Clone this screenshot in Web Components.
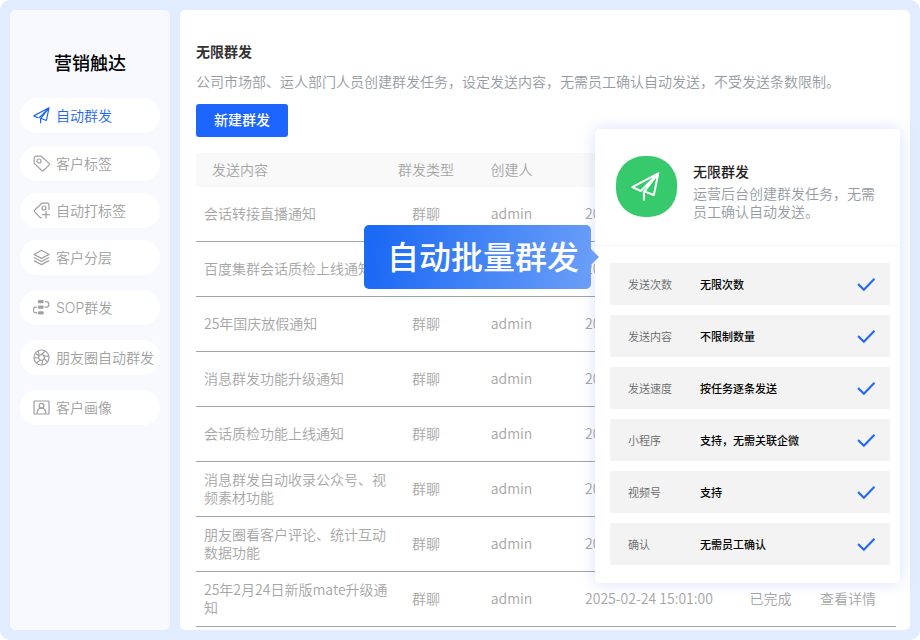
<!DOCTYPE html>
<html lang="zh-CN">
<head>
<meta charset="utf-8">
<title>营销触达</title>
<style>
html, body { margin: 0; background: #fff; }
body { font-family: "Noto Sans CJK SC", "Noto Sans", sans-serif; font-size: 14px; font-weight: 350; line-height: 18px; color: #999; }
</style>
</head>
<body>
<marketing-app></marketing-app>
<script>
const icons = {
  plane: '<path d="M5.500 11 .8 8.900 16 .8 13.400 13.500 8.200 11.500M7.600 16.200V11.700L16 .8 6 10.900"/>',
  tag: '<path d="M2.700 1.200h5.500L16 8.400a1.200 1.200 0 0 1 0 1.700l-5.500 5.400a1.300 1.300 0 0 1-1.800 0L1.200 8.400V2.700a1.500 1.500 0 0 1 1.500-1.500z"/><circle cx="6" cy="6" r="2"/>',
  tagplus: '<path d="M16 8V2.700a1.500 1.500 0 0 0-1.500-1.500H9L1.600 8a1.200 1.200 0 0 0 0 1.700l5.300 5.600a1.300 1.300 0 0 0 1.900 0M13 9v7.500M9.200 12.700h7.600"/><circle cx="11" cy="6" r="2"/>',
  layers: '<path d="M8.500 1.200 16 5.400 8.500 9.400 1 5.400zM1 8.500l7.500 4 7.500-4M1 11.600l7.500 4 7.500-4"/>',
  flow: '<g fill="currentColor" stroke="none"><rect x="5" y="1" width="5.600" height="3.200" rx="1"/><rect x="5" y="6.600" width="5.600" height="3.200" rx="1"/><rect x="5" y="12.200" width="5.600" height="3.200" rx="1"/></g><path d="M12 2.600h1a2.800 2.800 0 0 1 0 5.600h-1.500M4 8.200H3a2.800 2.800 0 0 0 0 5.600h1.500"/>',
  aperture: '<circle cx="8.500" cy="8.500" r="7.500"/><circle cx="8.500" cy="8.500" r="2.800"/><path d="M6 7.200 5.400 1.700M8.200 5.700l4-3.700M10.800 6.900l5.100.5M11.200 9.300l3.100 3.800M9.500 11.100l-.6 4.900M7.200 11l-3.800 3.100M5.700 9l-4.600-.2M6.200 7 2.600 4.200"/>',
  portrait: '<rect x="1" y="2" width="15" height="13" rx=".6"/><circle cx="8.500" cy="6.700" r="2.400"/><path d="M4 14.600c.2-3.400 2-5.500 4.500-5.500s4.300 2.100 4.500 5.500"/>',
  check: '<path d="M1 8.500 6.500 14 16.500 3.500"/>'
};
const define = (name, html, setup) => {
  const template = document.createElement('template');
  template.innerHTML = html;
  customElements.define(name, class extends HTMLElement {
    constructor() {
      super();
      this.attachShadow({ mode: 'open' }).append(template.content.cloneNode(true));
    }
    connectedCallback() { if (setup) setup(this, this.shadowRoot); }
  });
};

define('line-icon', `<style>
:host { display: block; flex: none; width: 17px; height: 17px; }
svg { display: block; width: 100%; height: 100%; fill: none; stroke: currentColor; stroke-width: var(--stroke, 1.2); stroke-linejoin: round; stroke-linecap: var(--cap, butt); }
</style><svg viewBox="0 0 17 17" aria-hidden="true"></svg>`,
(el, root) => { root.querySelector('svg').innerHTML = icons[el.getAttribute('name')]; });

define('nav-item', `<style>
:host { display: block; }
a { display: flex; align-items: center; gap: 6px; height: 35px; padding-left: 13px; box-sizing: border-box; border-radius: 18px; background: #fff; color: #a0a0a0; text-decoration: none; white-space: nowrap; font-family: Inter, "Noto Sans CJK SC", sans-serif; }
:host([active]) a { color: #1c66f5; }
</style><a href="#"><span><slot></slot></span></a>`,
(el, root) => {
  const link = root.querySelector('a');
  const icon = document.createElement('line-icon');
  icon.setAttribute('name', el.getAttribute('icon'));
  link.prepend(icon);
  if (el.hasAttribute('active')) link.setAttribute('aria-current', 'page');
});

define('side-bar', `<style>
:host { display: block; width: 160px; flex: none; padding: 38px 10px 10px; box-sizing: border-box; border-radius: 5px; background: #f7f9fe; }
h1 { margin: 0 0 22px; font-size: 18px; line-height: 28px; font-weight: 500; color: #000; text-align: center; }
nav { display: grid; gap: 15px; }
.top { display: grid; gap: 12px; }
nav-item[active] { margin-bottom: 1px; }
</style><h1>营销触达</h1>
<nav><div class="top">
<nav-item icon="plane" active>自动群发</nav-item>
<nav-item icon="tag">客户标签</nav-item>
<nav-item icon="tagplus">自动打标签</nav-item>
<nav-item icon="layers">客户分层</nav-item></div>
<nav-item icon="flow">SOP群发</nav-item>
<nav-item icon="aperture">朋友圈自动群发</nav-item>
<nav-item icon="portrait">客户画像</nav-item>
</nav>`);

define('task-table', `<style>
:host { display: block; }
table { width: 100%; table-layout: fixed; border-collapse: separate; border-spacing: 0; color: #a6a6a6; }
th, td { padding: 0 0 2px; font-weight: inherit; text-align: center; box-sizing: border-box; }
th { height: 34px; background: #f9f9f9; }
td { height: 55px; border-bottom: 1px solid #a1a3a5; }
th:first-child { text-align: left; padding-left: 16px; }
td:first-child { text-align: left; padding: 0 8px 3px; }
th:last-child, td:last-child { padding-right: 10px; }
a { color: inherit; text-decoration: none; }
</style><table><colgroup><col style="width:200px"><col style="width:60px"><col style="width:111px"><col style="width:164px"><col style="width:79px"><col></colgroup>
<thead><tr><th>发送内容</th><th>群发类型</th><th>创建人</th><th>发送时间</th><th>状态</th><th>操作</th></tr></thead><tbody></tbody></table>`,
(el, root) => {
  root.querySelector('tbody').innerHTML = ['会话转接直播通知', '百度集群会话质检上线通知', '25年国庆放假通知', '消息群发功能升级通知', '会话质检功能上线通知', '消息群发自动收录公众号、视频素材功能', '朋友圈看客户评论、统计互动数据功能', '25年2月24日新版mate升级通知']
    .map(t => `<tr><td>${t}</td><td>群聊</td><td>admin</td><td>2025-02-24 15:01:00</td><td>已完成</td><td><a href="#">查看详情</a></td></tr>`).join('');
});

define('feature-row', `<style>
:host { display: flex; align-items: center; height: 42px; padding: 0 15px 0 18px; box-sizing: border-box; background: #f3f3f3; font-size: 11px; }
.label { width: 72px; color: #666; }
.value { flex: 1; color: #000; font-weight: 500; }
line-icon { width: 18px; height: 18px; color: #1f69ff; --stroke: 2; }
</style><span class="label"><slot name="label"></slot></span><span class="value"><slot></slot></span><line-icon name="check"></line-icon>`);

define('feature-card', `<style>
:host { display: block; border-radius: 5px; background: #fff; box-shadow: 0 0 16px rgba(60, 100, 255, .2); }
header { display: flex; align-items: center; gap: 16px; height: 117px; padding: 0 20px 2px 21px; box-sizing: border-box; border-bottom: 1px solid #f5f5f5; }
.badge { display: grid; place-items: center; flex: none; width: 61px; height: 61px; padding-right: 3px; box-sizing: border-box; border-radius: 28px; background: #37ca6c; color: #fff; }
.badge line-icon { width: 29px; height: 29px; --stroke: 1.2; --cap: round; }
h2 { margin: 10px 0 4px; font-size: 14px; line-height: 18px; font-weight: 500; color: #222; }
p { margin: 0; color: #959ba3; }
.rows { display: grid; gap: 10px; padding: 17px 10px 18px 15px; }
</style><header><div class="badge"><line-icon name="plane"></line-icon></div><div><h2>无限群发</h2><p>运营后台创建群发任务，无需员工确认自动发送。</p></div></header>
<div class="rows">
<feature-row><span slot="label">发送次数</span>无限次数</feature-row>
<feature-row><span slot="label">发送内容</span>不限制数量</feature-row>
<feature-row><span slot="label">发送速度</span>按任务逐条发送</feature-row>
<feature-row><span slot="label">小程序</span>支持，无需关联企微</feature-row>
<feature-row><span slot="label">视频号</span>支持</feature-row>
<feature-row><span slot="label">确认</span>无需员工确认</feature-row>
</div>`);

define('callout-label', `<style>
:host { display: block; padding: 0 12px 4px 23px; border-radius: 5px; background: linear-gradient(100deg, #1b69f5 5%, #6b9ff8); color: #fff; font-size: 32px; line-height: 60px; font-weight: 500; white-space: nowrap; }
:host::after { content: ""; position: absolute; left: 100%; top: 50%; margin-top: -8px; border: 8px solid transparent; border-right: 0; border-left-color: #6b9ff8; }
</style><slot></slot>`);

define('task-panel', `<style>
:host { display: block; position: relative; flex: 1; min-width: 0; padding: 32px 14px 3px 16px; box-sizing: border-box; border-radius: 5px; background: #fff; }
h2 { margin: 0 0 12px; font-size: 14px; line-height: 18px; font-weight: 700; color: #333; }
p { margin: 0 0 14px; line-height: 18px; color: #959ba3; }
button { display: block; height: 33px; margin: 0 0 16px; padding: 0 18px 3px; border: 0; border-radius: 3px; background: #1c66ff; color: #fff; font: inherit; font-weight: 500; }
feature-card { position: absolute; top: 119px; right: 10px; width: 305px; }
callout-label { position: absolute; top: 215px; right: 319px; }
</style><h2>无限群发</h2>
<p>公司市场部、运人部门人员创建群发任务，设定发送内容，无需员工确认自动发送，不受发送条数限制。</p>
<button type="button">新建群发</button>
<task-table></task-table>
<feature-card></feature-card>
<callout-label>自动批量群发</callout-label>`);

define('marketing-app', `<style>
:host { display: flex; gap: 10px; min-height: 100vh; padding: 10px; box-sizing: border-box; border-radius: 10px; background: #e1ecff; }
</style><side-bar></side-bar><task-panel></task-panel>`);
</script>
</body>
</html>
